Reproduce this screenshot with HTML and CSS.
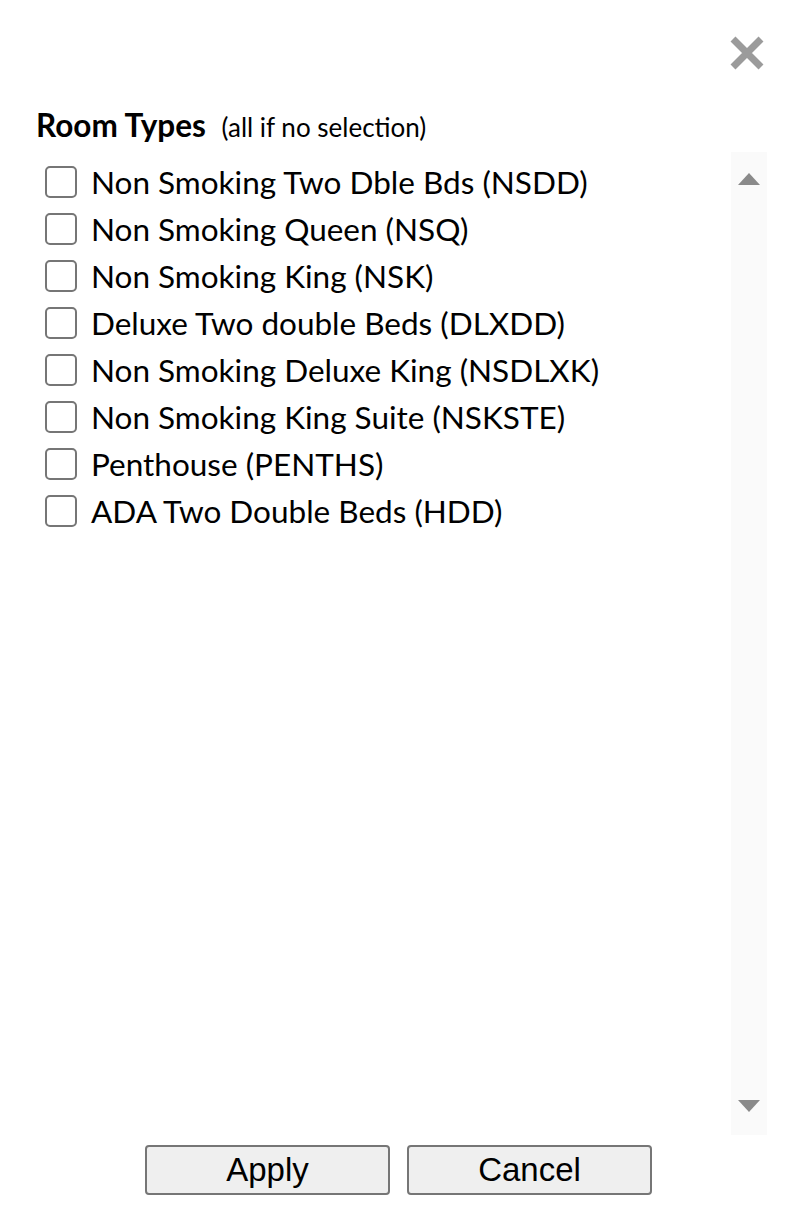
FILE: index.html
```html
<!DOCTYPE html>
<html lang="en">
<head>
  <meta charset="UTF-8" />
  <title>Room Types</title>
  <link rel="stylesheet" href="styles.css">
</head>
<body>
<div class="dialog">
  <div class="close-row">
    <button class="close-btn" aria-label="Close">
      <svg width="34" height="34" viewBox="0 0 34 34">
        <path d="M3 3 L31 31 M31 3 L3 31" stroke="#9b9b9b" stroke-width="7" />
      </svg>
    </button>
  </div>
  <h2 class="title">Room Types <span class="hint">(all if no selection)</span></h2>
  <div class="picker">
    <ul class="options">
      <li><label><input type="checkbox" value="NSDD"><span>Non Smoking Two Dble Bds (NSDD)</span></label></li>
      <li><label><input type="checkbox" value="NSQ"><span>Non Smoking Queen (NSQ)</span></label></li>
      <li><label><input type="checkbox" value="NSK"><span>Non Smoking King (NSK)</span></label></li>
      <li><label><input type="checkbox" value="DLXDD"><span>Deluxe Two double Beds (DLXDD)</span></label></li>
      <li><label><input type="checkbox" value="NSDLXK"><span>Non Smoking Deluxe King (NSDLXK)</span></label></li>
      <li><label><input type="checkbox" value="NSKSTE"><span>Non Smoking King Suite (NSKSTE)</span></label></li>
      <li><label><input type="checkbox" value="PENTHS"><span>Penthouse (PENTHS)</span></label></li>
      <li><label><input type="checkbox" value="HDD"><span>ADA Two Double Beds (HDD)</span></label></li>
    </ul>
    <div class="track">
      <span class="arrow up"></span>
      <span class="arrow down"></span>
    </div>
  </div>
  <div class="actions">
    <button class="btn">Apply</button>
    <button class="btn">Cancel</button>
  </div>
</div>
</body>
</html>
```

FILE: styles.css
```css
body {
  margin: 0;
  font-family: Lato, 'Noto Sans', sans-serif;
  background: #fff;
  color: #000;
}
.dialog {
  display: flex;
  flex-direction: column;
}
.close-row {
  display: flex;
  justify-content: flex-end;
  padding: 36px 33px 0 0;
}
.close-btn {
  background: none;
  border: none;
  padding: 0;
  width: 34px;
  height: 34px;
  cursor: pointer;
}
.close-btn svg {
  display: block;
}
.title {
  margin: 38px 0 0 36px;
  font-size: 31.5px;
  font-weight: 700;
  line-height: 34px;
}
.hint {
  font-size: 26px;
  font-weight: 400;
  margin-left: 8px;
}
.picker {
  display: flex;
  height: 983px;
  margin: 8px 30px 0 36px;
}
.options {
  flex: 1;
  list-style: none;
  margin: 0;
  padding: 6px 0 0 9px;
}
.options li {
  height: 47px;
  display: flex;
  align-items: center;
}
.options label {
  display: flex;
  align-items: center;
  gap: 14px;
  font-size: 31.5px;
  cursor: pointer;
}
.options input {
  appearance: none;
  margin: 0;
  width: 32px;
  height: 32px;
  border: 2px solid #767676;
  border-radius: 5px;
  background: #fff;
}
.track {
  width: 36px;
  background: #fafafa;
  display: flex;
  flex-direction: column;
  justify-content: space-between;
  align-items: center;
  padding: 21px 0 23px;
  box-sizing: border-box;
}
.arrow {
  width: 0;
  height: 0;
  border-left: 11px solid transparent;
  border-right: 11px solid transparent;
}
.arrow.up {
  border-bottom: 12px solid #8a8a8a;
}
.arrow.down {
  border-top: 12px solid #8a8a8a;
}
.actions {
  display: flex;
  justify-content: center;
  gap: 17px;
  margin-top: 10px;
}
.btn {
  width: 245px;
  height: 50px;
  background: #efefef;
  border: 2px solid #767676;
  border-radius: 4px;
  font-family: 'Liberation Sans', Arial, sans-serif;
  font-size: 33px;
  color: #000;
  padding: 0;
}
```
